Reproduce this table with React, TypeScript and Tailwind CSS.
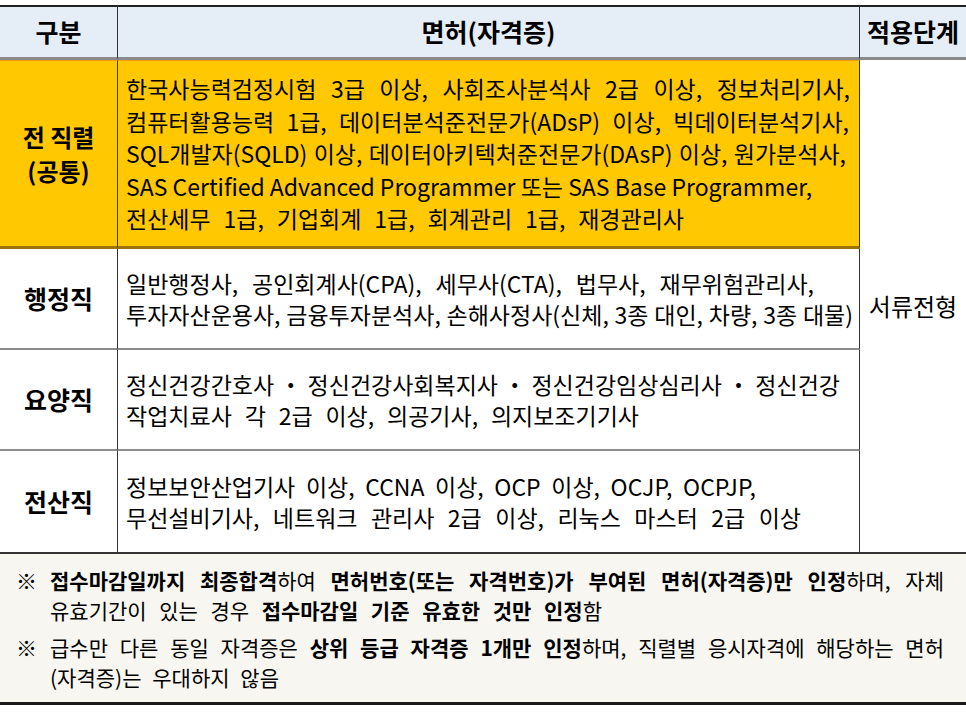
type Ln = { text: string; w?: string };

const common: Ln[] = [
  { text: "한국사능력검정시험 3급 이상, 사회조사분석사 2급 이상, 정보처리기사,", w: "w-[724px]" },
  { text: "컴퓨터활용능력 1급, 데이터분석준전문가(ADsP) 이상, 빅데이터분석기사,", w: "w-[723px]" },
  { text: "SQL개발자(SQLD) 이상, 데이터아키텍처준전문가(DAsP) 이상, 원가분석사,", w: "w-[720px]" },
  { text: "SAS Certified Advanced Programmer 또는 SAS Base Programmer," },
  { text: "전산세무 1급, 기업회계 1급, 회계관리 1급, 재경관리사", w: "w-[558px]" },
];

const rows: { label: string; lines: Ln[] }[] = [
  {
    label: "행정직",
    lines: [
      { text: "일반행정사, 공인회계사(CPA), 세무사(CTA), 법무사, 재무위험관리사,", w: "w-[688px]" },
      { text: "투자자산운용사, 금융투자분석사, 손해사정사(신체, 3종 대인, 차량, 3종 대물)", w: "w-[727px]" },
    ],
  },
  {
    label: "요양직",
    lines: [
      { text: "정신건강간호사 ・ 정신건강사회복지사 ・ 정신건강임상심리사 ・ 정신건강", w: "w-[714px]" },
      { text: "작업치료사 각 2급 이상, 의공기사, 의지보조기기사", w: "w-[513px]" },
    ],
  },
  {
    label: "전산직",
    lines: [
      { text: "정보보안산업기사 이상, CCNA 이상, OCP 이상, OCJP, OCPJP,", w: "w-[630px]" },
      { text: "무선설비기사, 네트워크 관리사 2급 이상, 리눅스 마스터 2급 이상", w: "w-[675px]" },
    ],
  },
];

function Line({ text, w }: Ln) {
  if (!w) return <div className="whitespace-nowrap">{text}</div>;
  return <div className={w + " text-justify [text-align-last:justify]"}>{text}</div>;
}

export default function App() {
  return (
    <div className="min-h-[714px] bg-white pt-[5px] font-['Noto_Sans_CJK_KR',sans-serif] text-black">
      <div className="grid w-[966px] grid-cols-[118px_742px_106px] text-[23px]">
        {/* header */}
        <div className="flex h-[55px] items-center justify-center border-t-2 border-r border-b-[3px] border-t-[#222] border-r-[#333] border-b-[#8a8a8a] bg-[#e5edf7] text-[25px] font-bold">
          구분
        </div>
        <div className="flex h-[55px] items-center justify-center border-t-2 border-r border-b-[3px] border-t-[#222] border-r-[#333] border-b-[#8a8a8a] bg-[#e5edf7] text-[25px] font-bold">
          면허(자격증)
        </div>
        <div className="flex h-[55px] items-center justify-center border-t-2 border-b-[3px] border-t-[#222] border-b-[#8a8a8a] bg-[#e5edf7] text-[25px] font-bold">
          적용단계
        </div>

        {/* common row */}
        <div className="flex h-[189px] flex-col items-center justify-center border-t border-r border-b-[3px] border-t-[#f39c00] border-r-[#333] border-b-[#9a7406] bg-[#ffc800] text-[24px] leading-[34px] font-bold">
          <div>전 직렬</div>
          <div>(공통)</div>
        </div>
        <div className="flex h-[189px] flex-col justify-center border-t border-r border-b-[3px] border-t-[#f39c00] border-r-[#333] border-b-[#9a7406] bg-[#ffc800] pl-[8px] leading-[32.5px]">
          {common.map((l) => (
            <Line key={l.text} {...l} />
          ))}
        </div>
        <div className="row-span-4 flex items-center justify-center text-[24px]">서류전형</div>

        {rows.map((r, i) => (
          <div key={r.label} className="contents">
            <div
              className={
                i < rows.length - 1
                  ? "flex h-[101px] items-center justify-center border-r border-b-2 border-r-[#333] border-b-[#8c8c8c] text-[25px] font-bold"
                  : "flex h-[101px] items-center justify-center border-r border-r-[#333] text-[25px] font-bold"
              }
            >
              {r.label}
            </div>
            <div
              className={
                i < rows.length - 1
                  ? "flex h-[101px] flex-col justify-center border-r border-b-2 border-r-[#333] border-b-[#8c8c8c] pl-[8px] leading-[31px]"
                  : "flex h-[101px] flex-col justify-center border-r border-r-[#333] pl-[8px] leading-[31px]"
              }
            >
              {r.lines.map((l) => (
                <Line key={l.text} {...l} />
              ))}
            </div>
          </div>
        ))}
      </div>

      {/* notes */}
      <div className="flex h-[153px] w-[966px] flex-col justify-center gap-[7px] border-t-2 border-b-[3px] border-t-[#333] border-b-[#1a1a1a] bg-[#f7f6f1] pr-[22px] pl-[16px] text-[21px] leading-[30px]">
        <div className="flex">
          <div className="w-[34px] shrink-0">※</div>
          <div className="flex-1">
            <div className="text-justify [text-align-last:justify]">
              <b>접수마감일까지 최종합격</b>하여 <b>면허번호(또는 자격번호)가 부여된 면허(자격증)만 인정</b>하며, 자체
            </div>
            <div className="w-[552px] text-justify [text-align-last:justify]">
              유효기간이 있는 경우 <b>접수마감일 기준 유효한 것만 인정</b>함
            </div>
          </div>
        </div>
        <div className="flex">
          <div className="w-[34px] shrink-0">※</div>
          <div className="flex-1">
            <div className="text-justify [text-align-last:justify]">
              급수만 다른 동일 자격증은 <b>상위 등급 자격증 1개만 인정</b>하며, 직렬별 응시자격에 해당하는 면허
            </div>
            <div className="w-[229px] text-justify [text-align-last:justify]">(자격증)는 우대하지 않음</div>
          </div>
        </div>
      </div>
    </div>
  );
}
